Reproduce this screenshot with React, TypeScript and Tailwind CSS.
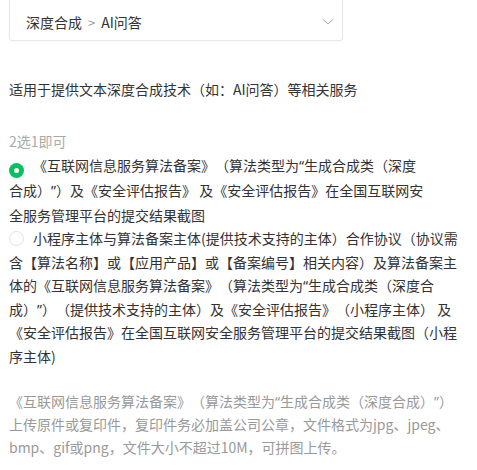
import { useState } from 'react';

const items = [
  [
    '《互联网信息服务算法备案》（算法类型为“生成合成类（深度',
    '合成）”）及《安全评估报告》 及《安全评估报告》在全国互联网安',
    '全服务管理平台的提交结果截图',
  ],
  [
    '小程序主体与算法备案主体(提供技术支持的主体）合作协议（协议需',
    '含【算法名称】或【应用产品】或【备案编号】相关内容）及算法备案主',
    '体的《互联网信息服务算法备案》（算法类型为“生成合成类（深度合',
    '成）”）（提供技术支持的主体）及《安全评估报告》（小程序主体） 及',
    '《安全评估报告》在全国互联网安全服务管理平台的提交结果截图（小程',
    '序主体)',
  ],
];

// curly quotes are narrow in the original, so draw them with a latin face
function withQuotes(text: string) {
  return text.split(/([“”])/).map((part, k) =>
    part === '“' || part === '”' ? (
      <span key={k} className="font-['Noto_Sans',sans-serif]">
        {part}
      </span>
    ) : (
      part
    )
  );
}

function Radio({ checked }: { checked: boolean }) {
  return (
    <span
      className={`inline-flex w-[15px] h-[15px] rounded-full items-center justify-center align-[-2px] mr-[9px] ${
        checked ? 'bg-[#07c160]' : 'border border-[#e3e3e3] bg-white'
      }`}
    >
      {checked && <span className="w-[5px] h-[5px] rounded-full bg-white" />}
    </span>
  );
}

export default function App() {
  const [selected, setSelected] = useState(0);

  return (
    <div
      className="w-[477px] h-[470px] overflow-hidden bg-white px-[9px] text-[14px] text-[#333] [text-spacing-trim:space-all]"
      style={{ fontFamily: '"Noto Sans CJK SC", "Noto Sans", sans-serif' }}
    >
      <div className="w-[334px] h-[41px] border-x border-b border-[#e8e8e8] rounded-b-[3px] flex items-center justify-between pl-[16px] pr-[8px] shadow-[0_1px_2px_rgba(0,0,0,0.03)]">
        <span className="flex items-center leading-none pt-[4px]">
          深度合成
          <span className="mx-[6px] text-[#999] text-[13px]">&gt;</span>
          AI问答
        </span>
        <svg width="12" height="8" viewBox="0 0 12 8" className="mt-[4px]">
          <path d="M1 1.5 L6 6 L11 1.5" fill="none" stroke="#aaa" strokeWidth="1" />
        </svg>
      </div>

      <p className="mt-[36px] leading-[24px]">适用于提供文本深度合成技术（如：AI问答）等相关服务</p>

      <p className="mt-[28px] leading-[24px] text-[#aaa]">2选1即可</p>

      <div className="w-[466px]">
        {items.map((lines, i) => (
          <div
            key={i}
            onClick={() => setSelected(i)}
            className={`cursor-pointer ${i === 0 ? 'leading-[24px]' : 'leading-[23.6px]'}`}
          >
            <Radio checked={selected === i} />
            {lines.map((line, j) => (
              <span key={j}>
                {withQuotes(line)}
                {j < lines.length - 1 && <br />}
              </span>
            ))}
          </div>
        ))}
      </div>

      <div className="mt-[21px] leading-[22.5px] text-[#999] w-[466px]">
        {withQuotes('《互联网信息服务算法备案》（算法类型为“生成合成类（深度合成）”）')}
        <br />
        上传原件或复印件，复印件务必加盖公司公章，文件格式为jpg、jpeg、
        <br />
        bmp、gif或png，文件大小不超过10M，可拼图上传。
      </div>
    </div>
  );
}
